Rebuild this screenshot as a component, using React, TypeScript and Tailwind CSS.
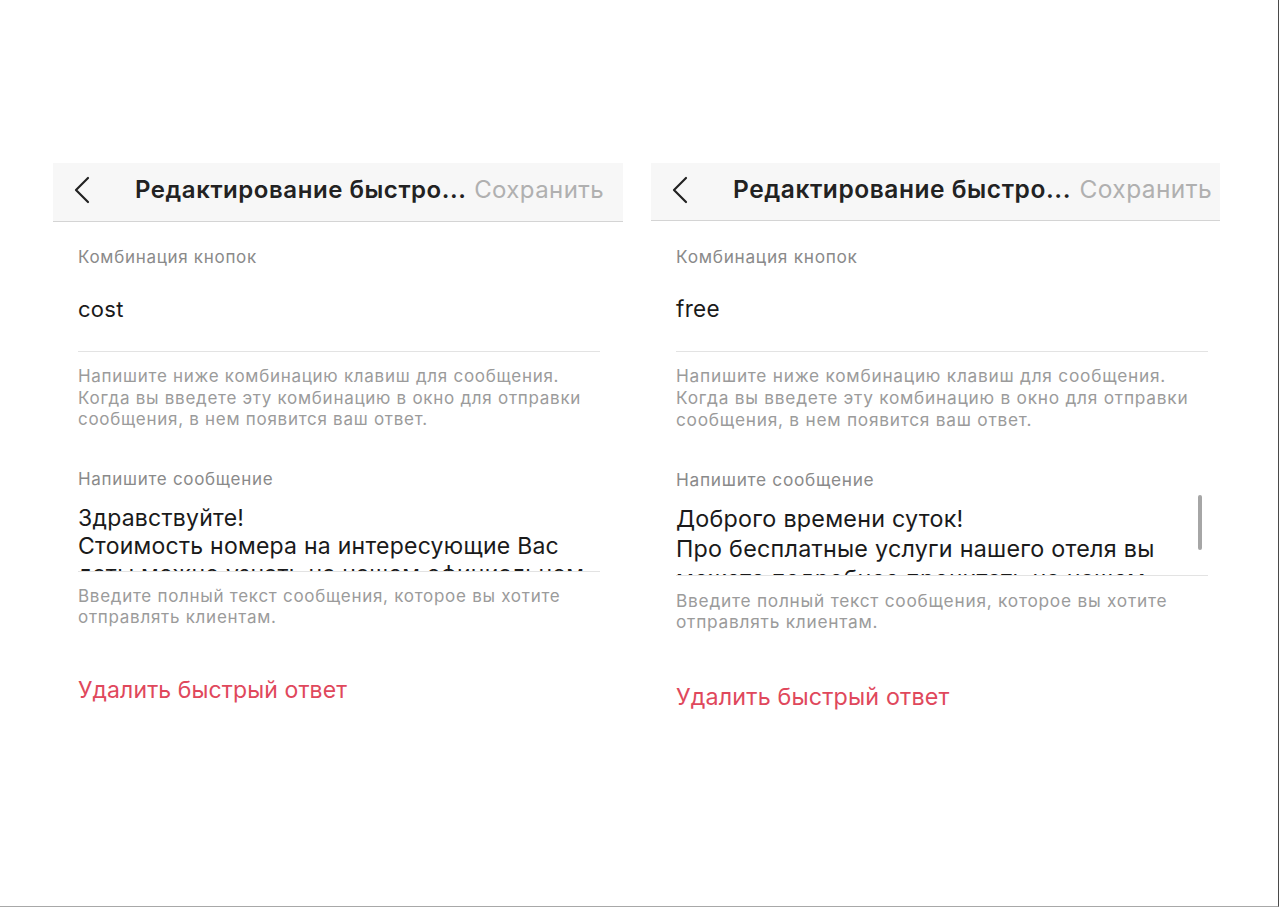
import React from "react"

interface PanelProps {
    variant: "left" | "right"
    value: string
    lines: string[]
    cutLine: string
}

function Chevron() {
    return (
        <svg width="18" height="28" viewBox="0 0 18 28" fill="none" className="shrink-0">
            <polyline points="15,2 3,14 15,26" stroke="#222" strokeWidth="2.2" strokeLinecap="round" strokeLinejoin="round" />
        </svg>
    )
}

function Panel({ variant, value, lines, cutLine }: PanelProps) {
    const r = variant === "right"
    return (
        <div className={r ? "w-[569px] flex flex-col" : "w-[570px] flex flex-col"}>
            {/* Navigation bar */}
            <div
                className={
                    r
                        ? "h-[58px] bg-[#f7f7f7] border-b border-[#d4d4d4] flex items-center pl-[20px] pr-[8px] pb-[4px]"
                        : "h-[59px] bg-[#f7f7f7] border-b border-[#d4d4d4] flex items-center pl-[20px] pr-[19px] pb-[4px]"
                }
            >
                <Chevron />
                <span
                    className={
                        r
                            ? "ml-[44px] text-[24.5px] font-semibold text-[#222] tracking-[0.55px] whitespace-nowrap"
                            : "ml-[44px] text-[24px] font-semibold text-[#222] tracking-[0.55px] whitespace-nowrap"
                    }
                >
                    Редактирование быстро...
                </span>
                <span
                    className={
                        r
                            ? "ml-auto text-[24.5px] text-[#b0b0b0] tracking-[0.4px] whitespace-nowrap"
                            : "ml-auto text-[24px] text-[#b0b0b0] tracking-[0.4px] whitespace-nowrap"
                    }
                >
                    Сохранить
                </span>
            </div>

            <div className={r ? "pl-[25px] pr-[12px] flex flex-col" : "pl-[25px] pr-[23px] flex flex-col"}>
                {/* Key combination */}
                <div
                    className={
                        r
                            ? "mt-[25px] text-[17.3px] leading-[21px] tracking-[0.7px] text-[#8a8a8a]"
                            : "mt-[25px] text-[17px] leading-[21px] tracking-[0.7px] text-[#8a8a8a]"
                    }
                >
                    Комбинация кнопок
                </div>
                <div
                    className={
                        r
                            ? "h-[85px] border-b border-[#e3e3e3] pt-[29px] text-[22.5px] leading-[26px] tracking-[0.3px] text-[#1a1a1a]"
                            : "h-[84px] border-b border-[#e3e3e3] pt-[28px] text-[22px] leading-[26px] tracking-[0.3px] text-[#1a1a1a]"
                    }
                >
                    {value}
                </div>
                <div
                    className={
                        r
                            ? "mt-[13px] text-[17.3px] leading-[22px] tracking-[0.75px] text-[#9b9b9b] whitespace-nowrap"
                            : "mt-[14px] text-[17px] leading-[21.5px] tracking-[0.72px] text-[#9b9b9b] whitespace-nowrap"
                    }
                >
                    Напишите ниже комбинацию клавиш для сообщения.
                    <br />
                    Когда вы введете эту комбинацию в окно для отправки
                    <br />
                    сообщения, в нем появится ваш ответ.
                </div>

                {/* Message */}
                <div
                    className={
                        r
                            ? "mt-[38px] text-[17.3px] leading-[21px] tracking-[0.7px] text-[#8a8a8a]"
                            : "mt-[38px] text-[17px] leading-[21px] tracking-[0.7px] text-[#8a8a8a]"
                    }
                >
                    Напишите сообщение
                </div>
                <div className={r ? "relative mt-[14px] h-[72px] border-b border-[#e3e3e3]" : "relative mt-[14px] h-[68px] border-b border-[#e3e3e3]"}>
                    <div
                        className={
                            r
                                ? "h-full overflow-hidden text-[23.3px] leading-[30px] tracking-[0.25px] text-[#1a1a1a] whitespace-nowrap"
                                : "h-full overflow-hidden text-[23px] leading-[28px] tracking-[0.25px] text-[#1a1a1a] whitespace-nowrap"
                        }
                    >
                        {lines.map((l) => (
                            <div key={l}>{l}</div>
                        ))}
                        {/* next line, scrolled out of view */}
                        <div className="h-[11px] overflow-hidden">{cutLine}</div>
                    </div>
                    {r && <div className="absolute right-[6px] top-[-9px] w-[4px] h-[55px] rounded-full bg-[#a6a6a6]" />}
                </div>
                <div
                    className={
                        r
                            ? "mt-[14px] text-[17.3px] leading-[21px] tracking-[0.75px] text-[#9b9b9b] whitespace-nowrap"
                            : "mt-[14px] text-[17px] leading-[21px] tracking-[0.72px] text-[#9b9b9b] whitespace-nowrap"
                    }
                >
                    Введите полный текст сообщения, которое вы хотите
                    <br />
                    отправлять клиентам.
                </div>

                {/* Delete */}
                <div
                    className={
                        r
                            ? "mt-[51px] text-[23.3px] leading-[28px] tracking-[0.15px] text-[#e0485c]"
                            : "mt-[48px] text-[23px] leading-[28px] tracking-[0.1px] text-[#e0485c]"
                    }
                >
                    Удалить быстрый ответ
                </div>
            </div>
        </div>
    )
}

export default function App() {
    return (
        <div
            className="w-[1280px] h-[908px] bg-white overflow-hidden"
            style={{ fontFamily: "Inter, 'Noto Sans', Roboto, sans-serif" }}
        >
            <div className="w-[1279px] h-[907px] border-r border-b border-r-[#4a4a4a] border-b-[#a8a8a8] flex gap-[28px] pl-[53px] pt-[163px]">
                <Panel
                    variant="left"
                    value="cost"
                    lines={["Здравствуйте!", "Стоимость номера на интересующие Вас"]}
                    cutLine="даты можно узнать на нашем официальном"
                />
                <Panel
                    variant="right"
                    value="free"
                    lines={["Доброго времени суток!", "Про бесплатные услуги нашего отеля вы"]}
                    cutLine="можете подробнее прочитать на нашем"
                />
            </div>
        </div>
    )
}
